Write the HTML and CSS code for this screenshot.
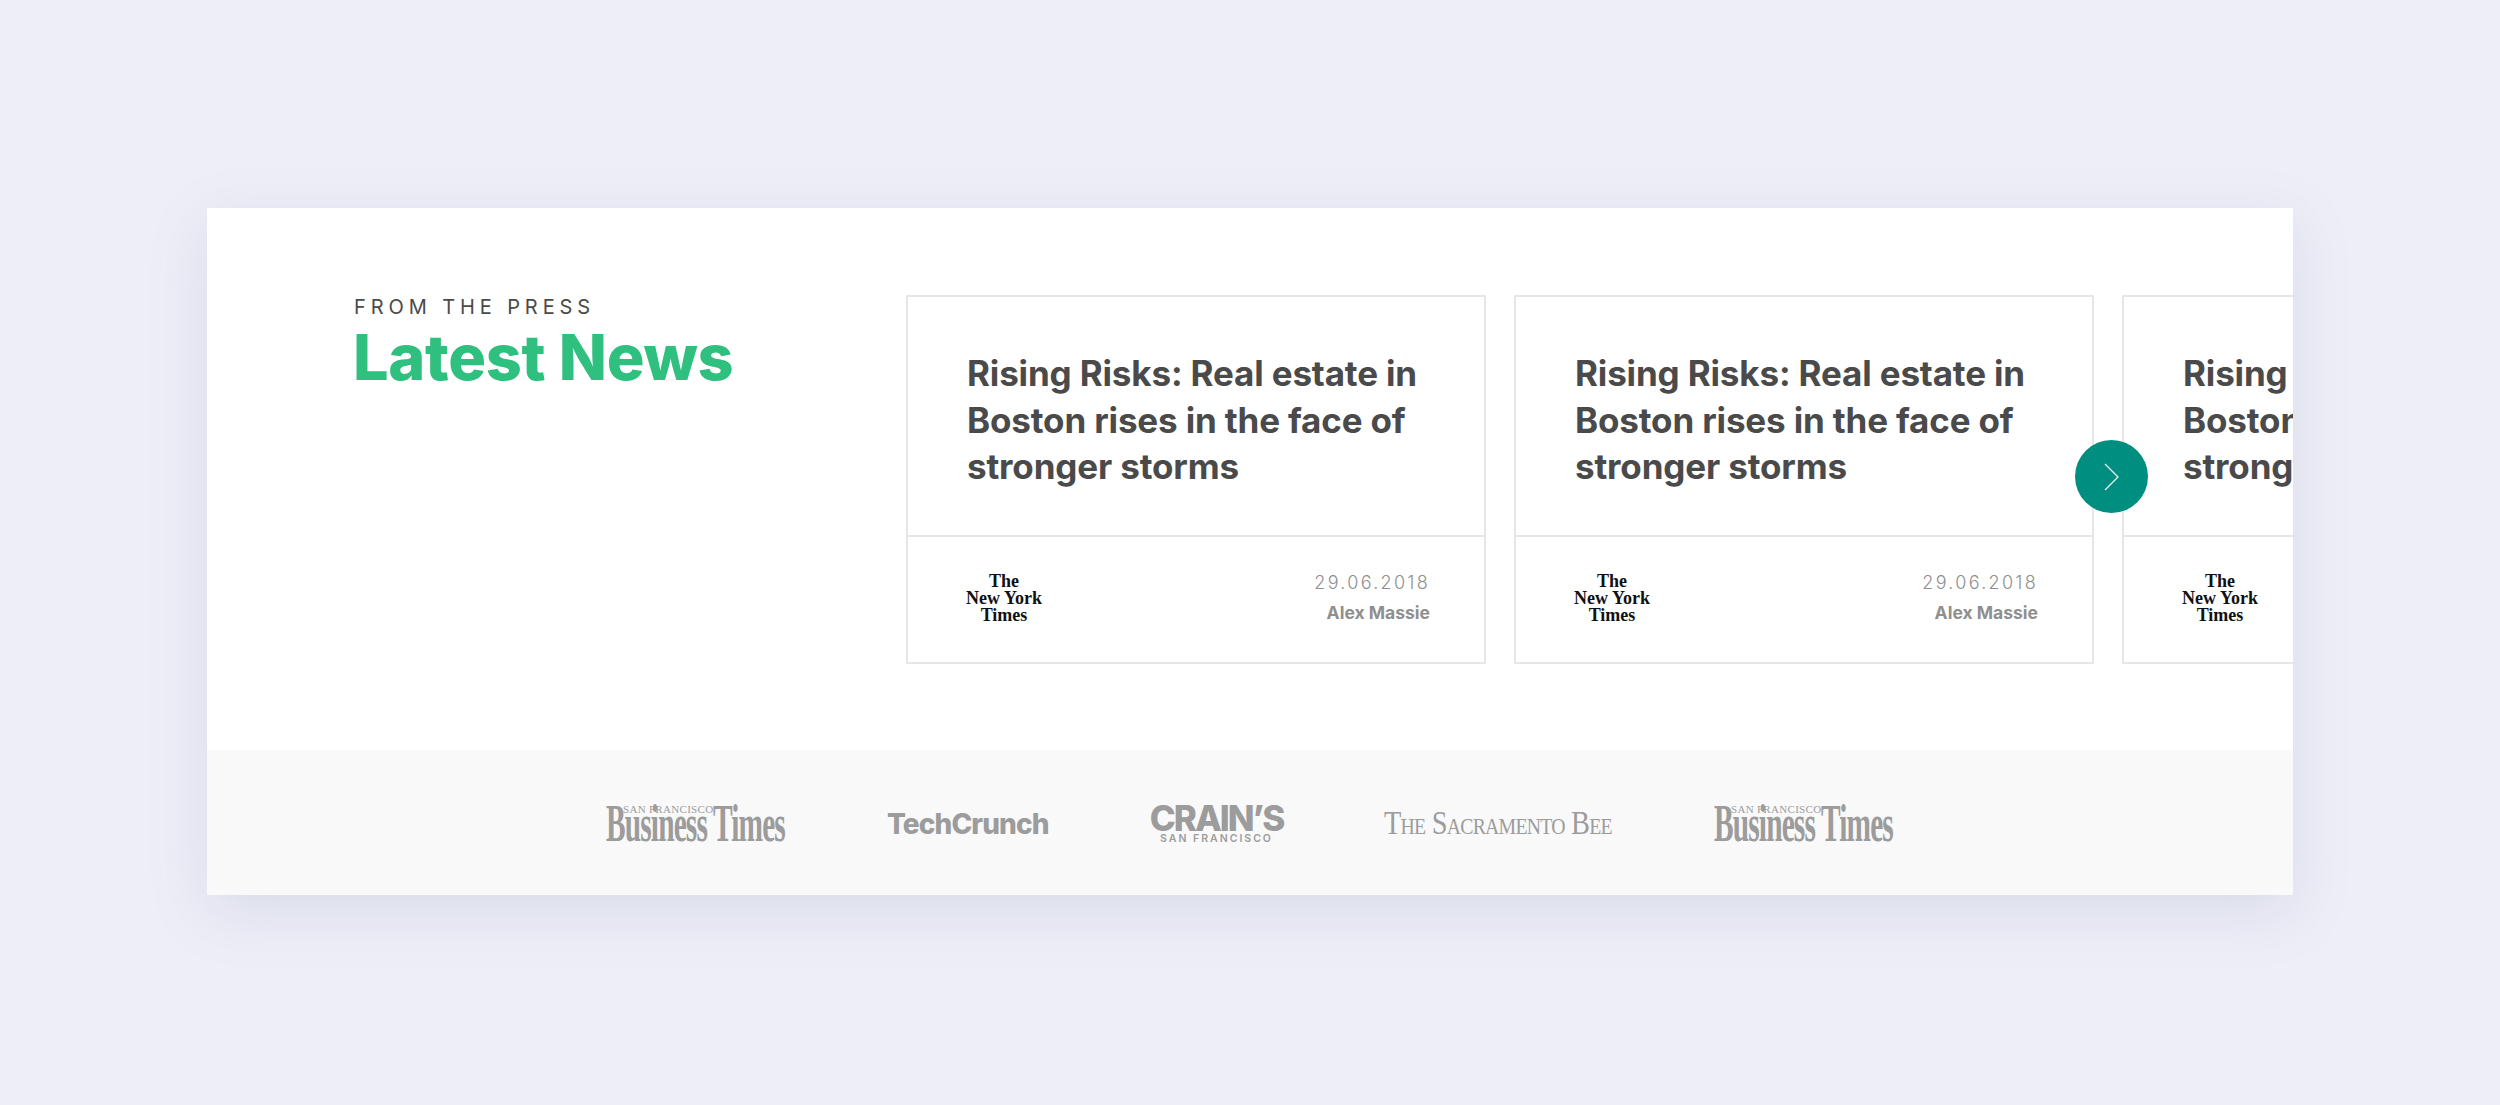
FILE: index.html
```html
<!DOCTYPE html>
<html lang="en">
<head>
<meta charset="utf-8">
<title>Latest News</title>
<link rel="stylesheet" href="styles.css">
</head>
<body>
<main class="panel">
  <section class="news">
    <header class="intro">
      <p class="eyebrow">FROM THE PRESS</p>
      <h1 class="heading">Latest News</h1>
    </header>
    <div class="carousel">
      <article class="card">
        <h2 class="card-title">Rising Risks: Real estate in Boston rises in the face of stronger storms</h2>
        <footer class="card-foot">
          <div class="nyt"><span>The</span><span>New York</span><span>Times</span></div>
          <div class="meta"><span class="date">29.06.2018</span><span class="author">Alex Massie</span></div>
        </footer>
      </article>
      <article class="card">
        <h2 class="card-title">Rising Risks: Real estate in Boston rises in the face of stronger storms</h2>
        <footer class="card-foot">
          <div class="nyt"><span>The</span><span>New York</span><span>Times</span></div>
          <div class="meta"><span class="date">29.06.2018</span><span class="author">Alex Massie</span></div>
        </footer>
      </article>
      <article class="card">
        <h2 class="card-title">Rising Risks: Real estate in Boston rises in the face of stronger storms</h2>
        <footer class="card-foot">
          <div class="nyt"><span>The</span><span>New York</span><span>Times</span></div>
          <div class="meta"><span class="date">29.06.2018</span><span class="author">Alex Massie</span></div>
        </footer>
      </article>
    </div>
    <button class="next" aria-label="Next">
      <svg width="18" height="28" viewBox="0 0 18 28"><path d="M2 1 L15 14 L2 27" fill="none" stroke="#e8f4f2" stroke-width="1.3"/></svg>
    </button>
  </section>
  <section class="press">
    <div class="logo sfbt"><span class="sfbt-top">SAN FRANCISCO</span><span class="sfbt-main">Business Times</span></div>
    <div class="logo tc">TechCrunch</div>
    <div class="logo crains"><span class="crains-main">CRAIN’S</span><span class="crains-sub">SAN FRANCISCO</span></div>
    <div class="logo bee"><span class="bee-text">The Sacramento Bee</span></div>
    <div class="logo sfbt"><span class="sfbt-top">SAN FRANCISCO</span><span class="sfbt-main">Business Times</span></div>
  </section>
</main>
</body>
</html>
```
FILE: styles.css
```css
* { box-sizing: border-box; }
html, body { margin: 0; height: 100%; }
body {
  background: #edeef7;
  padding: 208px 207px 0;
  font-family: "Inter", "Liberation Sans", sans-serif;
  overflow: hidden;
}
.panel {
  width: 2086px;
  height: 687px;
  background: #fff;
  box-shadow: 0 16px 56px rgba(120, 125, 170, 0.16);
  display: flex;
  flex-direction: column;
  overflow: hidden;
}
.news {
  position: relative;
  height: 542px;
  display: flex;
  padding-top: 87px;
  overflow: hidden;
}
.intro { width: 699px; padding-left: 147px; flex: none; }
.eyebrow {
  margin: 0;
  font-size: 20px;
  line-height: 24px;
  letter-spacing: 4.9px;
  color: #4a4a4a;
}
.heading {
  margin: 5px 0 0 -1px;
  font-size: 63px;
  line-height: 66px;
  font-weight: 800;
  letter-spacing: -0.3px;
  color: #2fbf7e;
}
.carousel { display: flex; gap: 28px; flex: none; }
.card {
  width: 580px;
  height: 369px;
  flex: none;
  border: 2px solid #e6e6e6;
  display: flex;
  flex-direction: column;
}
.card-title {
  margin: 0;
  height: 240px;
  padding: 53px 30px 0 59px;
  font-size: 35px;
  line-height: 46.5px;
  font-weight: 700;
  letter-spacing: -0.15px;
  color: #4a4a4a;
  border-bottom: 2px solid #e6e6e6;
}
.card-foot {
  flex: 1;
  display: flex;
  align-items: center;
  justify-content: space-between;
  padding: 0 54px 0 60px;
}
.nyt {
  display: flex;
  flex-direction: column;
  align-items: center;
  width: 72px;
  margin-top: -2px;
  font-family: "Liberation Serif", serif;
  font-weight: 700;
  font-size: 18px;
  line-height: 17px;
  color: #111;
  white-space: nowrap;
}
.meta { display: flex; flex-direction: column; align-items: flex-end; gap: 6px; margin-top: -4px; }
.date {
  font-size: 18px;
  line-height: 24px;
  font-weight: 300;
  letter-spacing: 2.3px;
  color: #8f8f8f;
}
.author {
  font-size: 17.5px;
  line-height: 24px;
  font-weight: 700;
  color: #8f8f8f;
}
.next {
  position: absolute;
  left: 1868px;
  top: 232px;
  width: 73px;
  height: 73px;
  padding: 0;
  border: 0;
  border-radius: 50%;
  background: #008e80;
  display: flex;
  align-items: center;
  justify-content: center;
}
.press {
  flex: 1;
  background: #f9f9f9;
  display: flex;
  align-items: center;
  gap: 101px;
  padding-left: 399px;
  color: #9c9c9c;
}
.logo { flex: none; white-space: nowrap; }
.sfbt {
  width: 180px;
  height: 36px;
  position: relative;
  font-family: "Liberation Serif", serif;
}
.sfbt-top {
  position: absolute;
  left: 17px;
  top: 0;
  font-size: 11px;
  line-height: 8px;
  letter-spacing: 0.3px;
}
.sfbt-main {
  display: block;
  font-size: 52px;
  line-height: 38px;
  font-weight: 700;
  letter-spacing: -1.5px;
  transform: scaleX(0.565);
  transform-origin: left top;
}
.tc {
  width: 162px;
  margin-top: 3px;
  font-weight: 800;
  font-size: 28px;
  line-height: 30px;
  letter-spacing: -0.9px;
}
.crains {
  width: 133px;
  display: flex;
  flex-direction: column;
  align-items: center;
  margin-top: 2px;
}
.crains-main { font-size: 35px; line-height: 30px; font-weight: 800; letter-spacing: -2px; }
.crains-sub { font-size: 10.5px; line-height: 11px; font-weight: 600; letter-spacing: 2px; }
.bee {
  width: 229px;
  font-family: "Liberation Serif", serif;
}
.bee-text {
  display: block;
  font-size: 33px;
  line-height: 34px;
  font-variant: small-caps;
  letter-spacing: -0.9px;
  transform: scaleX(0.86);
  transform-origin: left center;
}
```
